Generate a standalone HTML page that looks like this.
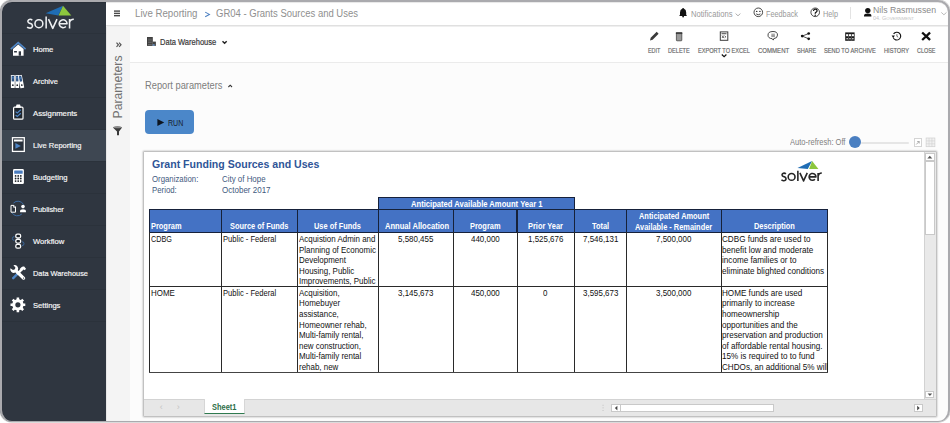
<!DOCTYPE html>
<html><head><meta charset="utf-8"><style>
*{margin:0;padding:0;box-sizing:border-box;}
html,body{width:950px;height:423px;overflow:hidden;background:#fff;}
body{position:relative;font-family:"Liberation Sans",sans-serif;}
.t{position:absolute;white-space:nowrap;line-height:1;transform-origin:0 0;}
.b{position:absolute;}
#frame{position:absolute;left:0.4px;top:0px;width:949.6px;height:421.8px;border-style:solid;border-color:#aaaaae;border-width:2.0px 2.2px 1.7px 2.3px;border-radius:12px;box-shadow:0 0 0 0.8px #cfcfcf,0 0 0 30px #fff,inset 0 0.4px 0.8px rgba(0,0,0,0.18);pointer-events:none;}
</style></head>
<body>
<div class="b" style="left:0px;top:0px;width:950px;height:423px;background:#fff;"></div><div class="b" style="left:0px;top:0px;width:106.4px;height:423px;background:#2f3640;"></div><div class="b" style="left:0px;top:130px;width:106px;height:31px;background:#3e4752;"></div><div class="b" style="left:0px;top:33px;width:106px;height:1px;background:#2b323b;"></div><div class="b" style="left:0px;top:65px;width:106px;height:1px;background:#2b323b;"></div><div class="b" style="left:0px;top:97px;width:106px;height:1px;background:#2b323b;"></div><div class="b" style="left:0px;top:129px;width:106px;height:1px;background:#2b323b;"></div><div class="b" style="left:0px;top:161px;width:106px;height:1px;background:#2b323b;"></div><div class="b" style="left:0px;top:193px;width:106px;height:1px;background:#2b323b;"></div><div class="b" style="left:0px;top:225px;width:106px;height:1px;background:#2b323b;"></div><div class="b" style="left:0px;top:257px;width:106px;height:1px;background:#2b323b;"></div><div class="b" style="left:0px;top:289px;width:106px;height:1px;background:#2b323b;"></div><div class="b" style="left:0px;top:321px;width:106px;height:1px;background:#2b323b;"></div><div class="b" style="left:106px;top:0px;width:844px;height:25px;background:#fff;"></div><div class="b" style="left:106px;top:25px;width:844px;height:1px;background:#e0e0e0;"></div><div class="b" style="left:106px;top:26px;width:844px;height:1px;background:#efefef;"></div><div class="b" style="left:106.4px;top:27px;width:24px;height:396px;background:#f4f4f4;"></div><div class="b" style="left:106.4px;top:27px;width:1px;height:396px;background:#e6e6e6;"></div><div class="b" style="left:129.6px;top:27px;width:0.8px;height:396px;background:#e9e9e9;"></div><div class="b" style="left:130.4px;top:27px;width:820px;height:396px;background:#fcfcfc;"></div><div class="b" style="left:130.4px;top:27px;width:820px;height:35px;background:#fff;"></div><div class="b" style="left:130.4px;top:62px;width:820px;height:1px;background:#ebebeb;"></div><div class="t" style="left:32.60px;top:46.05px;font-size:8.0px;color:#f4f4f4;transform:scaleX(0.9512);-webkit-text-stroke:0.2px #f6f6f6;">Home</div><div class="t" style="left:32.60px;top:78.05px;font-size:8.0px;color:#f4f4f4;transform:scaleX(0.9334);-webkit-text-stroke:0.2px #f6f6f6;">Archive</div><div class="t" style="left:32.60px;top:110.05px;font-size:8.0px;color:#f4f4f4;transform:scaleX(0.9651);-webkit-text-stroke:0.2px #f6f6f6;">Assignments</div><div class="t" style="left:32.60px;top:142.05px;font-size:8.0px;color:#f4f4f4;transform:scaleX(0.9382);-webkit-text-stroke:0.2px #f6f6f6;">Live Reporting</div><div class="t" style="left:32.60px;top:174.05px;font-size:8.0px;color:#f4f4f4;transform:scaleX(0.9547);-webkit-text-stroke:0.2px #f6f6f6;">Budgeting</div><div class="t" style="left:32.60px;top:206.05px;font-size:8.0px;color:#f4f4f4;transform:scaleX(0.9235);-webkit-text-stroke:0.2px #f6f6f6;">Publisher</div><div class="t" style="left:32.60px;top:238.05px;font-size:8.0px;color:#f4f4f4;transform:scaleX(0.9528);-webkit-text-stroke:0.2px #f6f6f6;">Workflow</div><div class="t" style="left:32.60px;top:270.05px;font-size:8.0px;color:#f4f4f4;transform:scaleX(0.9190);-webkit-text-stroke:0.2px #f6f6f6;">Data Warehouse</div><div class="t" style="left:32.60px;top:302.05px;font-size:8.0px;color:#f4f4f4;transform:scaleX(0.9479);-webkit-text-stroke:0.2px #f6f6f6;">Settings</div><div class="t" style="left:134.50px;top:9.05px;font-size:10.0px;color:#8f8f8f;transform:scaleX(0.9692);">Live Reporting</div><div class="t" style="left:216.00px;top:9.05px;font-size:10.0px;color:#8f8f8f;transform:scaleX(0.9498);">GR04 - Grants Sources and Uses</div><div class="t" style="left:691.00px;top:11.05px;font-size:8.2px;color:#999;transform:scaleX(0.9314);">Notifications</div><div class="t" style="left:766.00px;top:11.05px;font-size:8.2px;color:#999;transform:scaleX(0.8886);">Feedback</div><div class="t" style="left:823.00px;top:11.05px;font-size:8.2px;color:#999;transform:scaleX(0.8894);">Help</div><div class="b" style="left:850px;top:7px;width:1px;height:12px;background:#e3e3e3;"></div><div class="t" style="left:873.00px;top:6.05px;font-size:9.0px;color:#8a8a8a;transform:scaleX(0.9690);">Nils Rasmussen</div><div class="t" style="left:873px;top:16.05px;font-size:5px;color:#c4c4c4;transform:scaleX(1.085);">04. G<span style="font-size:4px">OVERNMENT</span></div><div class="t" style="left:647.70px;top:48.05px;font-size:6.6px;color:#666;transform:scaleX(0.8181);-webkit-text-stroke:0.15px #666;">EDIT</div><div class="t" style="left:668.00px;top:48.05px;font-size:6.6px;color:#666;transform:scaleX(0.8490);-webkit-text-stroke:0.15px #666;">DELETE</div><div class="t" style="left:697.70px;top:48.05px;font-size:6.6px;color:#666;transform:scaleX(0.8505);-webkit-text-stroke:0.15px #666;">EXPORT TO EXCEL</div><div class="t" style="left:757.80px;top:48.05px;font-size:6.6px;color:#666;transform:scaleX(0.9150);-webkit-text-stroke:0.15px #666;">COMMENT</div><div class="t" style="left:796.50px;top:48.05px;font-size:6.6px;color:#666;transform:scaleX(0.8487);-webkit-text-stroke:0.15px #666;">SHARE</div><div class="t" style="left:823.80px;top:48.05px;font-size:6.6px;color:#666;transform:scaleX(0.8663);-webkit-text-stroke:0.15px #666;">SEND TO ARCHIVE</div><div class="t" style="left:883.80px;top:48.05px;font-size:6.6px;color:#666;transform:scaleX(0.8592);-webkit-text-stroke:0.15px #666;">HISTORY</div><div class="t" style="left:916.80px;top:48.05px;font-size:6.6px;color:#666;transform:scaleX(0.8268);-webkit-text-stroke:0.15px #666;">CLOSE</div><div class="t" style="left:160.00px;top:38.05px;font-size:8.3px;color:#3a3a3a;transform:scaleX(0.9084);-webkit-text-stroke:0.2px #3a3a3a;">Data Warehouse</div><div class="t" style="left:145.40px;top:81.05px;font-size:10.2px;color:#7d7d7d;transform:scaleX(0.9125);">Report parameters</div><div class="b" style="left:144.6px;top:109.6px;width:49px;height:24.2px;background:#4b87c9;border-radius:4px;"></div><div class="t" style="left:167.80px;top:119.05px;font-size:8.5px;color:#17222e;transform:scaleX(0.8308);">RUN</div><div class="t" style="left:789.80px;top:138.05px;font-size:8.6px;color:#808080;transform:scaleX(0.8752);">Auto-refresh: Off</div><div class="b" style="left:861px;top:141.6px;width:48px;height:2.2px;background:#e6e6e6;border-radius:1px;"></div><div class="b" style="left:849.4px;top:136.3px;width:12px;height:12px;background:#4a7fc1;border-radius:50%;"></div><div class="b" style="left:913.8px;top:138.4px;width:8px;height:8.3px;border:1px solid #d4d4d4;background:#fff;"></div><div class="t" style="left:118.3px;top:86.7px;font-size:12.2px;color:#707070;transform-origin:50% 50%;transform:translate(-50%,-50%) rotate(-90deg);">Parameters</div><div class="b" style="left:144px;top:152px;width:792px;height:263.6px;background:#fff;box-shadow:0 0 1.8px 0.6px rgba(0,0,0,0.33);"></div><div class="t" style="left:151.60px;top:159.05px;font-size:11.4px;color:#2f5597;font-weight:bold;transform:scaleX(0.9273);">Grant Funding Sources and Uses</div><div class="t" style="left:151.60px;top:175.05px;font-size:8.6px;color:#3f5a80;transform:scaleX(0.9071);">Organization:</div><div class="t" style="left:222.40px;top:175.05px;font-size:8.6px;color:#3f5a80;transform:scaleX(0.9214);">City of Hope</div><div class="t" style="left:151.60px;top:186.05px;font-size:8.6px;color:#3f5a80;transform:scaleX(0.9101);">Period:</div><div class="t" style="left:222.40px;top:186.05px;font-size:8.6px;color:#3f5a80;transform:scaleX(0.9326);">October 2017</div><div class="b" style="left:378.7px;top:197.6px;width:195.59999999999997px;height:11.400000000000006px;background:#4472c4;"></div><div class="b" style="left:149.5px;top:209px;width:677.7px;height:23px;background:#4472c4;"></div><div class="b" style="left:378.4px;top:197.0px;width:196.7px;height:1.4px;background:#16213a;"></div><div class="b" style="left:149.2px;top:208.5px;width:678.8px;height:1.3px;background:#16213a;"></div><div class="b" style="left:149.2px;top:231.5px;width:678.8px;height:1.3px;background:#16213a;"></div><div class="b" style="left:148.9px;top:208.5px;width:1.3px;height:24px;background:#16213a;"></div><div class="b" style="left:220.70000000000002px;top:208.5px;width:1.3px;height:24px;background:#16213a;"></div><div class="b" style="left:296.7px;top:208.5px;width:1.3px;height:24px;background:#16213a;"></div><div class="b" style="left:378.09999999999997px;top:208.5px;width:1.3px;height:24px;background:#16213a;"></div><div class="b" style="left:452.79999999999995px;top:208.5px;width:1.3px;height:24px;background:#16213a;"></div><div class="b" style="left:516.4px;top:208.5px;width:1.3px;height:24px;background:#16213a;"></div><div class="b" style="left:573.6999999999999px;top:208.5px;width:1.3px;height:24px;background:#16213a;"></div><div class="b" style="left:626.1999999999999px;top:208.5px;width:1.3px;height:24px;background:#16213a;"></div><div class="b" style="left:720.6px;top:208.5px;width:1.3px;height:24px;background:#16213a;"></div><div class="b" style="left:826.6px;top:208.5px;width:1.3px;height:24px;background:#16213a;"></div><div class="b" style="left:378.1px;top:197.0px;width:1.3px;height:12px;background:#16213a;"></div><div class="b" style="left:573.7px;top:197.0px;width:1.3px;height:12px;background:#16213a;"></div><div class="b" style="left:149.0px;top:232px;width:1px;height:140.5px;background:#2a2a2a;"></div><div class="b" style="left:220.8px;top:232px;width:1px;height:140.5px;background:#2a2a2a;"></div><div class="b" style="left:296.8px;top:232px;width:1px;height:140.5px;background:#2a2a2a;"></div><div class="b" style="left:378.2px;top:232px;width:1px;height:140.5px;background:#2a2a2a;"></div><div class="b" style="left:452.9px;top:232px;width:1px;height:140.5px;background:#2a2a2a;"></div><div class="b" style="left:516.5px;top:232px;width:1px;height:140.5px;background:#2a2a2a;"></div><div class="b" style="left:573.8px;top:232px;width:1px;height:140.5px;background:#2a2a2a;"></div><div class="b" style="left:626.3px;top:232px;width:1px;height:140.5px;background:#2a2a2a;"></div><div class="b" style="left:720.7px;top:232px;width:1px;height:140.5px;background:#2a2a2a;"></div><div class="b" style="left:826.7px;top:232px;width:1px;height:140.5px;background:#2a2a2a;"></div><div class="b" style="left:149.5px;top:285.6px;width:677.7px;height:1px;background:#2a2a2a;"></div><div class="b" style="left:149.0px;top:371.6px;width:678.7px;height:1.1px;background:#444;"></div><div class="t" style="left:411.00px;top:200.05px;font-size:8.4px;color:#fff;font-weight:bold;transform:scaleX(0.9102);">Anticipated Available Amount Year 1</div><div class="t" style="left:151.30px;top:222.05px;font-size:8.4px;color:#fff;font-weight:bold;transform:scaleX(0.8850);">Program</div><div class="t" style="left:229.98px;top:222.05px;font-size:8.4px;color:#fff;font-weight:bold;transform:scaleX(0.8850);">Source of Funds</div><div class="t" style="left:314.46px;top:222.05px;font-size:8.4px;color:#fff;font-weight:bold;transform:scaleX(0.8850);">Use of Funds</div><div class="t" style="left:384.60px;top:222.05px;font-size:8.4px;color:#fff;font-weight:bold;transform:scaleX(0.9031);">Annual Allocation</div><div class="t" style="left:469.91px;top:222.05px;font-size:8.4px;color:#fff;font-weight:bold;transform:scaleX(0.8850);">Program</div><div class="t" style="left:528.15px;top:222.05px;font-size:8.4px;color:#fff;font-weight:bold;transform:scaleX(0.8850);">Prior Year</div><div class="t" style="left:591.95px;top:222.05px;font-size:8.4px;color:#fff;font-weight:bold;transform:scaleX(0.8850);">Total</div><div class="t" style="left:753.75px;top:222.05px;font-size:8.4px;color:#fff;font-weight:bold;transform:scaleX(0.8850);">Description</div><div class="t" style="left:638.83px;top:212.05px;font-size:8.4px;color:#fff;font-weight:bold;transform:scaleX(0.8850);">Anticipated Amount</div><div class="t" style="left:635.30px;top:223.05px;font-size:8.4px;color:#fff;font-weight:bold;transform:scaleX(0.8850);">Available - Remainder</div><div class="b" style="left:144px;top:232px;width:780px;height:140px;overflow:hidden;"><div class="t" style="left:7.30px;top:3.05px;font-size:8.6px;color:#111;transform:scaleX(0.84);">CDBG</div><div class="t" style="left:78.80px;top:3.05px;font-size:8.6px;color:#111;transform:scaleX(0.885);">Public - Federal</div><div class="t" style="left:154.60px;top:3.05px;font-size:8.6px;color:#111;transform:scaleX(0.925);">Acquistion Admin and</div><div class="t" style="left:154.60px;top:14.05px;font-size:8.6px;color:#111;transform:scaleX(0.925);">Planning of Economic</div><div class="t" style="left:154.60px;top:24.05px;font-size:8.6px;color:#111;transform:scaleX(0.925);">Development</div><div class="t" style="left:154.60px;top:35.05px;font-size:8.6px;color:#111;transform:scaleX(0.925);">Housing, Public</div><div class="t" style="left:154.60px;top:45.05px;font-size:8.6px;color:#111;transform:scaleX(0.925);">Improvements, Public</div><div class="t" style="left:254.35px;top:3.05px;font-size:8.6px;color:#111;transform:scaleX(0.925);">5,580,455</div><div class="t" style="left:326.82px;top:3.05px;font-size:8.6px;color:#111;transform:scaleX(0.925);">440,000</div><div class="t" style="left:383.95px;top:3.05px;font-size:8.6px;color:#111;transform:scaleX(0.925);">1,525,676</div><div class="t" style="left:438.85px;top:3.05px;font-size:8.6px;color:#111;transform:scaleX(0.925);">7,546,131</div><div class="t" style="left:512.30px;top:3.05px;font-size:8.6px;color:#111;transform:scaleX(0.925);">7,500,000</div><div class="t" style="left:577.90px;top:3.05px;font-size:8.6px;color:#111;transform:scaleX(0.945);">CDBG funds are used to</div><div class="t" style="left:577.90px;top:14.05px;font-size:8.6px;color:#111;transform:scaleX(0.945);">benefit low and moderate</div><div class="t" style="left:577.90px;top:24.05px;font-size:8.6px;color:#111;transform:scaleX(0.945);">income families or to</div><div class="t" style="left:577.90px;top:35.05px;font-size:8.6px;color:#111;transform:scaleX(0.945);">eliminate blighted conditions</div><div class="t" style="left:7.30px;top:57.05px;font-size:8.6px;color:#111;transform:scaleX(0.925);">HOME</div><div class="t" style="left:78.80px;top:57.05px;font-size:8.6px;color:#111;transform:scaleX(0.885);">Public - Federal</div><div class="t" style="left:154.60px;top:57.05px;font-size:8.6px;color:#111;transform:scaleX(0.925);">Acquisition,</div><div class="t" style="left:154.60px;top:67.05px;font-size:8.6px;color:#111;transform:scaleX(0.925);">Homebuyer</div><div class="t" style="left:154.60px;top:78.05px;font-size:8.6px;color:#111;transform:scaleX(0.925);">assistance,</div><div class="t" style="left:154.60px;top:89.05px;font-size:8.6px;color:#111;transform:scaleX(0.925);">Homeowner rehab,</div><div class="t" style="left:154.60px;top:99.05px;font-size:8.6px;color:#111;transform:scaleX(0.925);">Multi-family rental,</div><div class="t" style="left:154.60px;top:110.05px;font-size:8.6px;color:#111;transform:scaleX(0.925);">new construction,</div><div class="t" style="left:154.60px;top:120.05px;font-size:8.6px;color:#111;transform:scaleX(0.925);">Multi-family rental</div><div class="t" style="left:154.60px;top:131.05px;font-size:8.6px;color:#111;transform:scaleX(0.925);">rehab, new</div><div class="t" style="left:254.35px;top:57.05px;font-size:8.6px;color:#111;transform:scaleX(0.925);">3,145,673</div><div class="t" style="left:326.82px;top:57.05px;font-size:8.6px;color:#111;transform:scaleX(0.925);">450,000</div><div class="t" style="left:399.44px;top:57.05px;font-size:8.6px;color:#111;transform:scaleX(0.925);">0</div><div class="t" style="left:438.85px;top:57.05px;font-size:8.6px;color:#111;transform:scaleX(0.925);">3,595,673</div><div class="t" style="left:512.30px;top:57.05px;font-size:8.6px;color:#111;transform:scaleX(0.925);">3,500,000</div><div class="t" style="left:577.90px;top:57.05px;font-size:8.6px;color:#111;transform:scaleX(0.945);">HOME funds are used</div><div class="t" style="left:577.90px;top:67.05px;font-size:8.6px;color:#111;transform:scaleX(0.945);">primarily to increase</div><div class="t" style="left:577.90px;top:78.05px;font-size:8.6px;color:#111;transform:scaleX(0.945);">homeownership</div><div class="t" style="left:577.90px;top:89.05px;font-size:8.6px;color:#111;transform:scaleX(0.945);">opportunities and the</div><div class="t" style="left:577.90px;top:99.05px;font-size:8.6px;color:#111;transform:scaleX(0.945);">preservation and production</div><div class="t" style="left:577.90px;top:110.05px;font-size:8.6px;color:#111;transform:scaleX(0.945);">of affordable rental housing.</div><div class="t" style="left:577.90px;top:120.05px;font-size:8.6px;color:#111;transform:scaleX(0.945);">15% is required to to fund</div><div class="t" style="left:577.90px;top:131.05px;font-size:8.6px;color:#111;transform:scaleX(0.945);">CHDOs, an additional 5% will</div></div><div class="b" style="left:923.7px;top:152px;width:12px;height:247.5px;background:#e9e9e9;border-left:1px solid #d2d2d2;"></div><div class="b" style="left:924.8px;top:152.8px;width:10px;height:8px;background:#fff;border:1px solid #c9c9c9;"></div><div class="b" style="left:924.8px;top:160.6px;width:10px;height:74.5px;background:#fff;border:1px solid #c9c9c9;"></div><div class="b" style="left:925.4px;top:390.6px;width:9px;height:7.8px;background:#fff;border:1px solid #c9c9c9;"></div><div class="b" style="left:144px;top:399.4px;width:792px;height:16.2px;background:#e7e7e7;border-top:1px solid #d3d3d3;"></div><div class="b" style="left:203.7px;top:399.4px;width:41px;height:14.6px;background:#fff;border-left:1px solid #d6d6d6;border-right:1px solid #d6d6d6;border-bottom:1.3px solid #2f7a4f;"></div><div class="t" style="left:211.60px;top:403.05px;font-size:8.6px;color:#2d6e48;font-weight:bold;transform:scaleX(0.8651);">Sheet1</div><div class="t" style="left:159.80px;top:403.05px;font-size:9px;color:#c4c4c4;">&lsaquo;</div><div class="t" style="left:176.80px;top:403.05px;font-size:9px;color:#c4c4c4;">&rsaquo;</div><div class="b" style="left:611.4px;top:403.9px;width:9.3px;height:8.4px;background:#fff;border:1px solid #c9c9c9;"></div><div class="b" style="left:620.2px;top:403.9px;width:154.3px;height:8.4px;background:#fff;border:1px solid #c9c9c9;"></div><div class="b" style="left:914px;top:403.9px;width:8.7px;height:8.4px;background:#fff;border:1px solid #c9c9c9;"></div><svg class="b" style="left:0;top:0" width="950" height="423" viewBox="0 0 950 423"><g transform="translate(27,19.1)"><g fill="none" stroke="#eef0f2" stroke-width="1.55" stroke-linecap="butt" stroke-linejoin="round"><path d="M5.3,1.2 C4.4,0.3 2.6,0.1 1.6,0.8 C0.4,1.7 0.7,3.5 2.4,4.1 L3.5,4.5 C5.5,5.2 6.0,7.1 4.8,8.3 C3.6,9.4 1.3,9.2 0.2,7.9"/><circle cx="11.9" cy="4.6" r="3.95"/><path d="M19.15,-2.6 V9.3"/><path d="M21.5,0 L25.75,9.3 L30.0,0"/><path d="M32.25,4.6 H40.05 A3.95,3.95 0 1 0 38.9,7.4"/><path d="M42.55,0 V9.3 M42.55,3.6 Q43.2,0.2 46.8,0.2"/></g></g><polygon points="45.6,13.3 63,5.8 58.3,15.4" fill="#1f6db4"/><polygon points="63,5.8 71.3,15.4 58.6,15.6" fill="#8cc63e"/><g transform="translate(781.3,172.9) scale(0.865)"><g fill="none" stroke="#262626" stroke-width="1.85" stroke-linecap="butt" stroke-linejoin="round"><path d="M5.3,1.2 C4.4,0.3 2.6,0.1 1.6,0.8 C0.4,1.7 0.7,3.5 2.4,4.1 L3.5,4.5 C5.5,5.2 6.0,7.1 4.8,8.3 C3.6,9.4 1.3,9.2 0.2,7.9"/><circle cx="11.9" cy="4.6" r="3.95"/><path d="M19.15,-2.6 V9.3"/><path d="M21.5,0 L25.75,9.3 L30.0,0"/><path d="M32.25,4.6 H40.05 A3.95,3.95 0 1 0 38.9,7.4"/><path d="M42.55,0 V9.3 M42.55,3.6 Q43.2,0.2 46.8,0.2"/></g></g><polygon points="797.5,167.9 812.1,161 807.8,168.9" fill="#1f6db4"/><polygon points="812.1,161 818.4,168.9 809.1,169.0" fill="#8cc63e"/><polyline points="10.8,49.2 18.2,42.6 25.6,49.2" fill="none" stroke="#4f86c6" stroke-width="1.6"/><polygon points="13,49 18.2,44.4 23.6,49 23.6,55.7 13,55.7" fill="#ffffff"/><rect x="14.1" y="51" width="2.8" height="1.5" fill="#2f3640"/><rect x="18.7" y="51.3" width="2.3" height="4.4" fill="#2f3640"/><rect x="10.9" y="75" width="3.9" height="13" rx="0.4" fill="#ffffff"/><rect x="11.65" y="75.8" width="2.4" height="5.6" fill="#2f5585"/><rect x="11.65" y="77.5" width="2.4" height="0.8" fill="#5d8fd0"/><circle cx="12.85" cy="85.2" r="0.85" fill="#1d232a"/><rect x="15.3" y="75" width="3.9" height="13" rx="0.4" fill="#ffffff"/><rect x="16.05" y="75.8" width="2.4" height="5.6" fill="#2f5585"/><rect x="16.05" y="77.5" width="2.4" height="0.8" fill="#5d8fd0"/><circle cx="17.25" cy="85.2" r="0.85" fill="#1d232a"/><g transform="rotate(-11 22 88)"><rect x="20.4" y="75" width="3.9" height="13" rx="0.4" fill="#ffffff"/><rect x="21.15" y="75.8" width="2.4" height="5.6" fill="#2f5585"/><rect x="21.15" y="77.5" width="2.4" height="0.8" fill="#5d8fd0"/><circle cx="22.349999999999998" cy="85.2" r="0.85" fill="#1d232a"/></g><rect x="13.6" y="107.2" width="9.4" height="12" rx="1" fill="#20262d" stroke="#ffffff" stroke-width="1.2"/><polygon points="15.5,107.8 16.6,104.6 20,104.6 21.1,107.8" fill="#ffffff"/><polyline points="15.6,111.6 17.3,113 20.8,109.8" fill="none" stroke="#4f86c6" stroke-width="1.2"/><polyline points="15.6,115 17.3,116.5 20.8,113.3" fill="none" stroke="#4f86c6" stroke-width="1.2"/><rect x="12.5" y="137.7" width="11.8" height="13.7" fill="#28303a" stroke="#ffffff" stroke-width="1.3"/><rect x="14" y="139.5" width="8.6" height="2" fill="#ffffff"/><polygon points="15.4,143 20.8,145.9 15.4,148.8" fill="#4f86c6"/><rect x="13" y="169.1" width="10.9" height="14.9" rx="1.3" fill="#ffffff"/><rect x="14.2" y="170.4" width="8.5" height="3.4" rx="0.6" fill="#4a7cbf"/><circle cx="15.6" cy="175.9" r="0.9" fill="#1d2228"/><circle cx="18.2" cy="175.9" r="0.9" fill="#1d2228"/><circle cx="20.8" cy="175.9" r="0.9" fill="#1d2228"/><circle cx="15.6" cy="178.5" r="0.9" fill="#1d2228"/><circle cx="18.2" cy="178.5" r="0.9" fill="#1d2228"/><circle cx="20.8" cy="178.5" r="0.9" fill="#1d2228"/><circle cx="15.6" cy="181.1" r="0.9" fill="#1d2228"/><circle cx="18.2" cy="181.1" r="0.9" fill="#1d2228"/><circle cx="20.8" cy="181.1" r="0.9" fill="#1d2228"/><path d="M13.5,203 A6.3,6.3 0 0 1 23.5,204.5" fill="none" stroke="#3c6ca4" stroke-width="1"/><path d="M21.8,214 A6.3,6.3 0 0 1 11.8,212.5" fill="none" stroke="#3c6ca4" stroke-width="1"/><path d="M11,205.4 h2.9 l1.6,1.6 v5.2 h-4.5 z" fill="#2f3640" stroke="#ffffff" stroke-width="1"/><path d="M13.6,205.4 v1.9 h1.9" fill="none" stroke="#ffffff" stroke-width="0.8"/><circle cx="23" cy="206.6" r="1.8" fill="#ffffff"/><path d="M20.1,212.2 v-1 q0,-1.9 2.9,-1.9 q2.9,0 2.9,1.9 v1 z" fill="#ffffff"/><path d="M14.4,236.6 A1.9,1.9 0 0 0 12.4,238.5 A1.9,1.9 0 0 0 14.4,240.4" fill="none" stroke="#3c6ca4" stroke-width="0.9"/><path d="M22,241.8 A1.9,1.9 0 0 1 24,243.7 A1.9,1.9 0 0 1 22,245.6" fill="none" stroke="#3c6ca4" stroke-width="0.9"/><rect x="15.8" y="234.2" width="4.8" height="3.8" rx="1.5" fill="#1b2026" stroke="#ffffff" stroke-width="1.3"/><rect x="15.8" y="239.3" width="4.8" height="3.8" rx="1.5" fill="#1b2026" stroke="#ffffff" stroke-width="1.3"/><rect x="15.8" y="244.4" width="4.8" height="3.8" rx="1.5" fill="#1b2026" stroke="#ffffff" stroke-width="1.3"/><path d="M19.6,269.2 L21.4,267.2 Q22.6,266 24.2,266.6 L26,268.8 L24.8,270.3 L23.6,269.5 L22.3,270.6 Z" fill="#ffffff"/><path d="M17.2,274.2 L13.2,278.2" stroke="#4f86c6" stroke-width="2.4" stroke-linecap="round"/><path d="M21.8,269.4 L17.2,274.2" stroke="#ffffff" stroke-width="2.4"/><path d="M10.4,268.2 A3.6,3.6 0 0 0 15.4,272.6 L22.6,279.4 A1.6,1.6 0 0 0 24.9,277.2 L17.8,270.2 A3.6,3.6 0 0 0 13.4,265.2 L15.4,267.6 L14.9,269.3 L13,269.9 Z" fill="#ffffff"/><circle cx="23.6" cy="278.1" r="0.6" fill="#2f3640"/><polygon points="23.15,303.52 25.29,303.53 25.29,306.07 23.15,306.08 22.52,307.60 24.02,309.13 22.23,310.92 20.70,309.42 19.18,310.05 19.17,312.19 16.63,312.19 16.62,310.05 15.10,309.42 13.57,310.92 11.78,309.13 13.28,307.60 12.65,306.08 10.51,306.07 10.51,303.53 12.65,303.52 13.28,302.00 11.78,300.47 13.57,298.68 15.10,300.18 16.62,299.55 16.63,297.41 19.17,297.41 19.18,299.55 20.70,300.18 22.23,298.68 24.02,300.47 22.52,302.00" fill="#ffffff"/><circle cx="17.9" cy="304.8" r="5.6" fill="#ffffff"/><circle cx="17.9" cy="304.8" r="2.6" fill="#2f3640"/><polyline points="116.5,42.7 118.4,44.8 116.5,46.9" fill="none" stroke="#555" stroke-width="1.2"/><polyline points="119.1,42.7 121,44.8 119.1,46.9" fill="none" stroke="#555" stroke-width="1.2"/><path d="M112.9,127.5 Q117.5,125.3 122.1,127.5 L119,131.4 V135.1 Q118,135.9 117,135.1 V131.4 Z" fill="#3a3a3a"/><ellipse cx="117.5" cy="127.3" rx="3.9" ry="1" fill="#8a8a8a"/><polyline points="205.2,12.1 209.4,14.4 205.2,16.7" fill="none" stroke="#4a7fc1" stroke-width="1.05"/><rect x="114" y="10.4" width="6" height="1.4" fill="#4a4a4a"/><rect x="114" y="12.7" width="6" height="1.4" fill="#4a4a4a"/><rect x="114" y="15.0" width="6" height="1.4" fill="#4a4a4a"/><path d="M683.1,7.9 q0.9,0 0.9,0.9 q2.2,0.8 2.2,3.6 v2.4 l0.8,1.1 h-7.8 l0.8,-1.1 v-2.4 q0,-2.8 2.2,-3.6 q0,-0.9 0.9,-0.9 z" fill="#111"/><circle cx="683.1" cy="16.5" r="0.9" fill="#111"/><polyline points="735.6,13.6 738,15.8 740.4,13.6" fill="none" stroke="#9a9a9a" stroke-width="0.8"/><circle cx="758.3" cy="12.3" r="4.3" fill="none" stroke="#333" stroke-width="0.9"/><ellipse cx="756.7" cy="11.4" rx="0.8" ry="0.55" fill="#333"/><ellipse cx="759.9" cy="11.4" rx="0.8" ry="0.55" fill="#333"/><path d="M756.2,13.9 q2.1,1.7 4.2,0" fill="none" stroke="#333" stroke-width="0.9"/><circle cx="815.2" cy="12.3" r="4.3" fill="none" stroke="#333" stroke-width="0.9"/><path d="M813.5,11.1 C813.5,9.8 814.3,9.2 815.3,9.2 C816.4,9.2 817.1,9.9 817.1,10.8 C817.1,11.7 816.5,12 815.9,12.4 C815.4,12.7 815.2,13.1 815.2,13.8" fill="none" stroke="#111" stroke-width="1.25"/><circle cx="815.2" cy="15.3" r="0.75" fill="#111"/><circle cx="867.8" cy="10.6" r="2.7" fill="#111"/><path d="M864,16.5 v-0.8 q0,-2.2 3.8,-2.2 q3.6,0 3.6,2.2 v0.8 z" fill="#111"/><polyline points="941.3,12.4 943.9,14.8 946.5,12.4" fill="none" stroke="#aaa" stroke-width="0.8"/><path d="M650,40.4 l0.7,-2.6 6,-6 1.9,1.9 -6,6 z" fill="#3a3a3a"/><rect x="675.8" y="32.3" width="6.6" height="1.6" rx="0.5" fill="#222"/><rect x="676.4" y="33.6" width="5.4" height="7.2" rx="0.6" fill="#9a9a9a" stroke="#333" stroke-width="0.7"/><rect x="720.3" y="31.9" width="7.5" height="8.4" fill="#fff" stroke="#3a3a3a" stroke-width="1"/><rect x="721.5" y="33.3" width="5" height="0.9" fill="#333"/><path d="M722,35.5 l1.8,2.5 M723.8,35.5 l-1.8,2.5 M724.6,35.8 l1.3,1 -1.3,1" stroke="#333" stroke-width="0.7" fill="none"/><polyline points="721.8,54.5 724.1,56.6 726.4,54.5" fill="none" stroke="#111" stroke-width="1.2"/><path d="M773,31.5 q4.5,0 4.5,3.6 q0,3.2 -3.8,3.6 l-0.4,1.4 -1.1,-1.4 q-4.2,-0.3 -4.2,-3.6 q0,-3.6 5,-3.6 z" fill="#fff" stroke="#333" stroke-width="0.9"/><path d="M771.3,34.2 h3.6 M771.3,35.4 h3.6 M771.3,36.6 h3.6" stroke="#444" stroke-width="0.6"/><path d="M808.7,33.5 L802.2,36.1 L808.7,38.8" fill="none" stroke="#222" stroke-width="0.8"/><circle cx="808.7" cy="33.5" r="1.35" fill="#111"/><circle cx="802.2" cy="36.1" r="1.35" fill="#111"/><circle cx="808.7" cy="38.8" r="1.35" fill="#111"/><rect x="845.2" y="32.4" width="9.4" height="8.4" fill="#1a1a1a"/><rect x="846.1" y="34.2" width="2" height="2" fill="#fff"/><rect x="849.0" y="34.2" width="2" height="2" fill="#fff"/><rect x="851.9" y="34.2" width="2" height="2" fill="#fff"/><circle cx="847.1" cy="38.7" r="0.75" fill="#fff"/><circle cx="850" cy="38.7" r="0.75" fill="#fff"/><circle cx="852.9" cy="38.7" r="0.75" fill="#fff"/><rect x="848.4" y="33.8" width="0.5" height="7" fill="#777"/><rect x="851.3" y="33.8" width="0.5" height="7" fill="#777"/><path d="M893.2,37.6 A3.9,3.9 0 1 0 893.6,33.9" fill="none" stroke="#111" stroke-width="1.15"/><polygon points="891.6,35.6 894.9,35.6 893.2,38.1" fill="#111"/><path d="M896.9,34.2 v2.1 l1.3,0.9" fill="none" stroke="#444" stroke-width="0.8"/><path d="M923,33.3 L929.2,39.2 M929.2,33.3 L923,39.2" stroke="#111" stroke-width="2.3" stroke-linecap="square"/><rect x="147" y="37" width="5.8" height="8.9" fill="#3f3f3f"/><rect x="152.8" y="41.6" width="3.1" height="4.3" fill="#444"/><rect x="152.6" y="44.2" width="2" height="1.7" fill="#6b93c2"/><rect x="148" y="38.8" width="3.8" height="0.7" fill="#777"/><rect x="148" y="40.6" width="3.8" height="0.7" fill="#777"/><rect x="148" y="42.4" width="3.8" height="0.7" fill="#777"/><rect x="148" y="44.2" width="3.8" height="0.7" fill="#777"/><polyline points="222.5,41.3 224.6,43.3 226.7,41.3" fill="none" stroke="#222" stroke-width="1.45"/><polyline points="228.4,87 230.2,85.2 232,87" fill="none" stroke="#333" stroke-width="1.1"/><polygon points="157.4,119 164.2,122.5 157.4,126" fill="#0d1520"/><rect x="926.1" y="138" width="8.8" height="8.7" fill="#f1f1f1" stroke="#d0d0d0" stroke-width="0.7"/><line x1="929.03" y1="138" x2="929.03" y2="146.7" stroke="#d0d0d0" stroke-width="0.6"/><line x1="926.1" y1="140.90" x2="934.9" y2="140.90" stroke="#d0d0d0" stroke-width="0.6"/><line x1="931.96" y1="138" x2="931.96" y2="146.7" stroke="#d0d0d0" stroke-width="0.6"/><line x1="926.1" y1="143.80" x2="934.9" y2="143.80" stroke="#d0d0d0" stroke-width="0.6"/><path d="M916.2,144.5 l3,-3 m-2,0 h2 v2" fill="none" stroke="#9a9a9a" stroke-width="0.8"/><polygon points="927.3,158.4 929.8,155.8 932.3,158.4" fill="#555"/><polygon points="927.6,393.4 929.9,395.9 932.2,393.4" fill="#555"/><polygon points="617.4,405.8 614.9,408.1 617.4,410.4" fill="#444"/><polygon points="917.2,405.8 919.7,408.1 917.2,410.4" fill="#444"/><rect x="602.6" y="404.8" width="0.9" height="0.9" fill="#bbb"/><rect x="602.6" y="407.4" width="0.9" height="0.9" fill="#bbb"/><rect x="602.6" y="410" width="0.9" height="0.9" fill="#bbb"/></svg><div id="frame"></div>
</body></html>
